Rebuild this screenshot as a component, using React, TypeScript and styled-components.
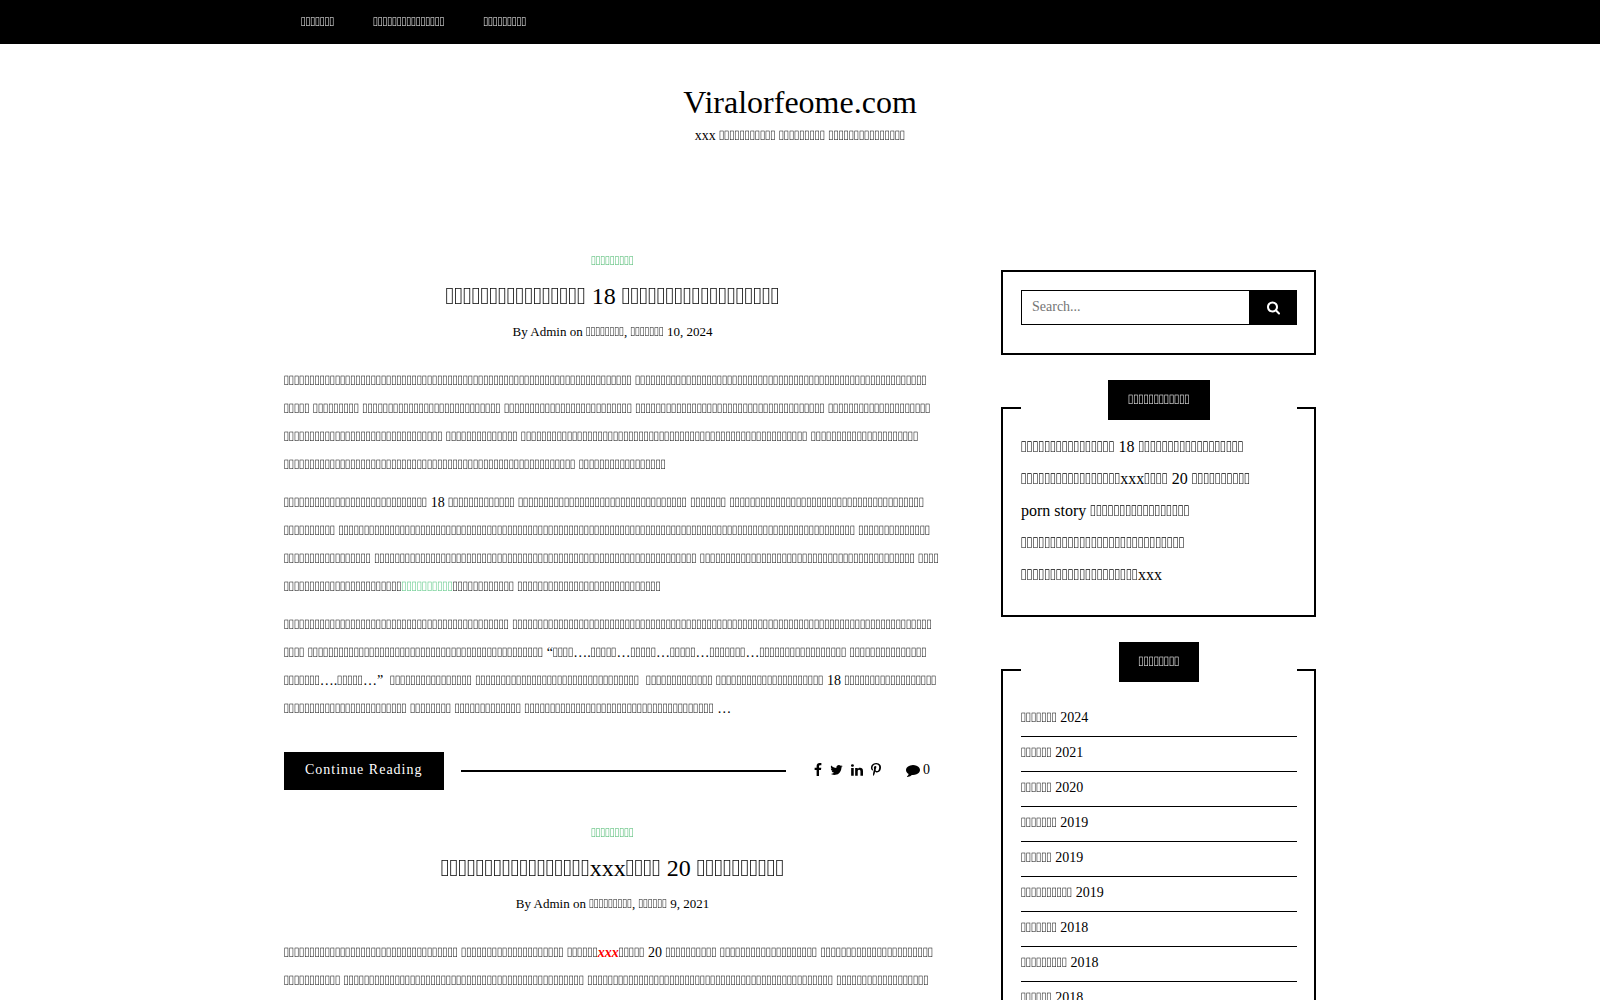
import React from "react";
import styled, { createGlobalStyle } from "styled-components";

const Global = createGlobalStyle`
  *, *::before, *::after { box-sizing: border-box; }
  body {
    margin: 0;
    background: #fff;
    color: #000;
    font-family: "Liberation Serif", "Times New Roman", serif;
    font-size: 14px;
    line-height: 28px;
  }
  a { color: inherit; text-decoration: none; }
  ul { list-style: none; margin: 0; padding: 0; }
`;

/* A run of letters outside the page's main typeface */
const Letters = styled.span`
  font-family: "WenQuanYi Zen Hei", sans-serif;
  line-height: 1;
`;

const BOX = String.fromCodePoint(0x10fffd);

const Word = ({ n }: { n: number }) => <Letters>{BOX.repeat(n)}</Letters>;

/* Text in which every number in braces stands for a word of that many letters */
const Copy = ({ text }: { text: string }) => (
  <>
    {text.split(/\{(\d+)\}/).map((part, i) =>
      i % 2 ? <Word key={i} n={Number(part)} /> : part
    )}
  </>
);

const Container = styled.div`
  width: 100%;
  max-width: 1032px;
  margin: 0 auto;
`;

const TopBar = styled.nav`
  background: #000;
  color: #fff;
`;

const Menu = styled.ul`
  display: flex;
  gap: 39px;
  padding: 0 17px;
  font-size: 13px;
  line-height: 44px;
`;

const Brand = styled.header`
  padding: 39px 0 96px;
  text-align: center;
`;

const SiteTitle = styled.h1`
  margin: 0;
  font-size: 32px;
  font-weight: 400;
  line-height: 38px;
`;

const Tagline = styled.p`
  margin: 0;
  line-height: 30px;
`;

const Columns = styled(Container)`
  display: grid;
  grid-template-columns: minmax(0, 1fr) 315px;
  gap: 60px;
  align-items: start;
`;

const Post = styled.article`
  margin-bottom: 29px;
`;

const PostHeader = styled.header`
  display: flex;
  flex-direction: column;
  align-items: center;
  margin-bottom: 21px;
`;

const Category = styled.a`
  && { color: #3cb362; }
  font-size: 13px;
  line-height: 28px;
`;

const PostTitle = styled.h2`
  margin: 0;
  font-size: 24px;
  font-weight: 400;
  line-height: 43px;
`;

const Meta = styled.p`
  margin: 0;
  font-size: 13px;
  line-height: 28px;
`;

const Paragraph = styled.p`
  margin: 0 0 10px;
  white-space: pre-line;
`;

const InlineLink = styled.a`
  && { color: #4fc47c; }
`;

const Highlight = styled.strong`
  color: #f00;
  font-style: italic;
`;

const PostFooter = styled.footer`
  display: flex;
  align-items: center;
  margin-top: 29px;
  padding-right: 11px;
`;

const ReadMore = styled.a`
  && { color: #fff; }
  background: #000;
  padding: 0 21px 2px;
  line-height: 36px;
  letter-spacing: 1px;
`;

const Rule = styled.hr`
  flex: 1;
  height: 2px;
  margin: 0 28px 0 17px;
  border: 0;
  background: #000;
`;

const Share = styled.div`
  display: flex;
  gap: 8px;
  margin-right: 25px;
`;

const IconLink = styled.a`
  display: flex;
  align-items: center;
  gap: 3px;
  padding-bottom: 3px;
  line-height: 28px;
`;

const Icon = styled.svg`
  display: block;
  height: 14px;
  fill: currentColor;
`;

const Sidebar = styled.aside`
  display: flex;
  flex-direction: column;
  gap: 52px;
  padding-top: 23px;
`;

const Widget = styled.section`
  border: 2px solid #000;
  padding: 0 17px 24px 18px;
`;

const SearchWidget = styled(Widget)`
  padding: 18px 17px 28px 18px;
`;

const SearchForm = styled.form`
  display: flex;
`;

const SearchInput = styled.input`
  flex: 1;
  min-width: 0;
  height: 35px;
  padding: 0 10px 2px;
  border: 1px solid #000;
  border-right: 0;
  border-radius: 0;
  outline: 0;
  font-family: inherit;
  font-size: 14px;
  &::placeholder { color: #757575; }
`;

const SearchButton = styled.button`
  display: flex;
  align-items: center;
  justify-content: center;
  width: 48px;
  height: 35px;
  padding: 0;
  border: 0;
  background: #000;
  color: #fff;
`;

const WidgetTitle = styled.h3`
  display: flex;
  justify-content: center;
  margin: -29px 0 0;
  background: #fff;
  font-size: 14px;
  font-weight: 400;
  line-height: 40px;
`;

const WidgetLabel = styled.span`
  padding: 0 20px;
  background: #000;
  color: #fff;
`;

const RecentList = styled.ul`
  padding-top: 11px;
  font-size: 16px;
  line-height: 32px;
`;

const ArchiveList = styled.ul`
  padding-top: 20px;
  li {
    padding: 4px 0 6px;
    border-bottom: 1px solid #000;
    line-height: 24px;
  }
`;

const paths = {
  facebook: { box: "399 0 1024 1792", w: 8, d: "M1343 12v264h-157q-86 0-116 36t-30 108v189h293l-39 296h-254v759h-306v-759h-255v-296h255v-218q0-186 104-288.5t277-102.5q147 0 228 12z" },
  twitter: { box: "64 0 1664 1792", w: 13, d: "M1684 408q-67 98-162 167 1 14 1 42 0 130-38 259.5t-115.5 248.5-184.5 210.5-258 146-323 54.5q-271 0-496-145 35 4 78 4 225 0 401-138-105-2-188-64.5t-114-159.5q33 5 61 5 43 0 85-11-112-23-185.5-111.5t-73.5-205.5v-4q68 38 146 41-66-44-105-115t-39-154q0-88 44-163 121 149 294.5 238.5t371.5 99.5q-8-38-8-74 0-134 94.5-228.5t228.5-94.5q140 0 236 102 109-21 205-78-37 115-142 178 93-10 186-50z" },
  linkedin: { box: "128 0 1536 1792", w: 12, d: "M477 625v991h-330v-991h330zm21-306q1 73-50.5 122t-135.5 49h-2q-82 0-132-49t-50-122q0-74 51.5-122.5t134.5-48.5 133 48.5 51 122.5zm1166 729v568h-329v-530q0-105-40.5-164.5t-126.5-59.5q-63 0-105.5 34.5t-63.5 85.5q-11 30-11 81v553h-329q2-399 2-647t-1-296l-1-48h329v144h-2q20-32 41-56t56.5-52 87-43.5 114.5-15.5q171 0 275 113.5t104 332.5z" },
  pinterest: { box: "256 0 1280 1792", w: 10, d: "M256 597q0-108 37.5-203.5t103.5-166.5 152-123 185-78 202-26q158 0 294 66.5t221 193.5 85 287q0 96-19 188t-60 177-100 149.5-145 103-189 38.5q-68 0-135-32t-96-88q-10 39-28 112.5t-23.5 95-20.5 71-26 71-32 62.5-46 77.5-62 86.5l-14 5-9-10q-15-157-15-188 0-92 21.5-206.5t66.5-287.5 52-203q-32-65-32-169 0-83 52-156t132-73q61 0 95 40.5t34 102.5q0 66-44 191t-44 187q0 63 45 104.5t109 41.5q55 0 102-25t78.5-68 56-95 38-110.5 20-111 6.5-99.5q0-173-109.5-269.5t-285.5-96.5q-200 0-334 129.5t-134 328.5q0 44 12.5 85t27 65 27 45.5 12.5 30.5q0 28-15 73t-37 45q-2 0-17-3-51-15-90.5-56t-61-94.5-32.5-108-11-106.5z" },
  comment: { box: "0 0 1792 1792", w: 14, d: "M1792 896q0 174-120 321.5t-326 233-450 85.5q-70 0-145-8-198 175-460 242-49 14-114 22-17 2-30.5-9t-17.5-29v-1q-3-4-.5-12t2-10 4.5-9.5l6-9 7-8.5 8-9q7-8 31-34.5t34.5-38 31-39.5 32.5-51 27-59 26-76q-157-89-247.5-220t-90.5-281q0-130 71-248.5t191-204.5 286-136.5 348-50.5q244 0 450 85.5t326 233 120 321.5z" },
  search: { box: "64 128 1664 1664", w: 13, d: "M1216 832q0-185-131.5-316.5t-316.5-131.5-316.5 131.5-131.5 316.5 131.5 316.5 316.5 131.5 316.5-131.5 131.5-316.5zm512 832q0 52-38 90t-90 38q-54 0-90-38l-343-342q-179 124-399 124-143 0-273.5-55.5t-225-150-150-225-55.5-273.5 55.5-273.5 150-225 225-150 273.5-55.5 273.5 55.5 225 150 150 225 55.5 273.5q0 220-124 399l343 343q37 37 37 90z" },
};

const Glyph = ({ name }: { name: keyof typeof paths }) => (
  <Icon viewBox={paths[name].box} width={paths[name].w} aria-hidden="true">
    <path d={paths[name].d} />
  </Icon>
);

const PostHead = ({ title, date }: { title: string; date: string }) => (
  <PostHeader>
    <Category href="#"><Word n={9} /></Category>
    <PostTitle><a href="#"><Copy text={title} /></a></PostTitle>
    <Meta>By <a href="#">Admin</a> on <Copy text={date} /></Meta>
  </PostHeader>
);

const recent = ["{16} 18 {18}", "{17}xxx{4} 20 {10}", "porn story {17}", "{28}", "{20}xxx"];

const archives = [
  "{7} 2024", "{6} 2021", "{6} 2020", "{7} 2019", "{6} 2019",
  "{10} 2019", "{7} 2018", "{9} 2018", "{6} 2018",
];

export default function App() {
  return (
    <>
      <Global />
      <TopBar>
        <Container>
          <Menu>
            {[7, 15, 9].map((n) => (
              <li key={n}><a href="#"><Word n={n} /></a></li>
            ))}
          </Menu>
        </Container>
      </TopBar>
      <Brand>
        <SiteTitle><a href="#">Viralorfeome.com</a></SiteTitle>
        <Tagline><Copy text="xxx {11} {9} {15}" /></Tagline>
      </Brand>
      <Columns>
        <main>
          <Post>
            <PostHead title="{16} 18 {18}" date="{8}, {7} 10, 2024" />
            <Paragraph>
              <Copy text={"{68} {57}\n{5} {9} {27} {25} {37} {20}\n{31} {14} {56} {21}\n{57} {17}"} />
            </Paragraph>
            <Paragraph>
              <Copy text={"{28} 18 {13} {33} {7} {38}\n{10} {101} {14}\n{17} {63} {42} {4}\n{23}"} />
              <InlineLink href="#"><Word n={10} /></InlineLink>
              <Copy text="{12} {28}" />
            </Paragraph>
            <Paragraph>
              <Copy text={"{44} {82}\n{4} {46} “{4}….{5}…{5}…{5}…{7}…{17} {15}\n{7}….{5}…”\u00a0 {16} {32}\u00a0 {13} {21} 18 {18}\n{24} {8} {13} {37} …"} />
            </Paragraph>
            <PostFooter>
              <ReadMore href="#">Continue Reading</ReadMore>
              <Rule />
              <Share>
                <IconLink href="#" aria-label="Facebook"><Glyph name="facebook" /></IconLink>
                <IconLink href="#" aria-label="Twitter"><Glyph name="twitter" /></IconLink>
                <IconLink href="#" aria-label="LinkedIn"><Glyph name="linkedin" /></IconLink>
                <IconLink href="#" aria-label="Pinterest"><Glyph name="pinterest" /></IconLink>
              </Share>
              <IconLink href="#"><Glyph name="comment" />0</IconLink>
            </PostFooter>
          </Post>
          <Post>
            <PostHead title="{17}xxx{4} 20 {10}" date="{9}, {6} 9, 2021" />
            <Paragraph>
              <Copy text="{34} {20} {6}" />
              <Highlight>xxx</Highlight>
              <Copy text={"{5} 20 {10} {19} {22}\n{11} {47} {48} {18}"} />
            </Paragraph>
          </Post>
        </main>
        <Sidebar>
          <SearchWidget>
            <SearchForm role="search">
              <SearchInput type="search" placeholder="Search..." aria-label="Search" />
              <SearchButton type="submit" aria-label="Search"><Glyph name="search" /></SearchButton>
            </SearchForm>
          </SearchWidget>
          <Widget>
            <WidgetTitle><WidgetLabel><Word n={12} /></WidgetLabel></WidgetTitle>
            <RecentList>
              {recent.map((r) => <li key={r}><a href="#"><Copy text={r} /></a></li>)}
            </RecentList>
          </Widget>
          <Widget>
            <WidgetTitle><WidgetLabel><Word n={8} /></WidgetLabel></WidgetTitle>
            <ArchiveList>
              {archives.map((a, i) => <li key={i}><a href="#"><Copy text={a} /></a></li>)}
            </ArchiveList>
          </Widget>
        </Sidebar>
      </Columns>
    </>
  );
}
